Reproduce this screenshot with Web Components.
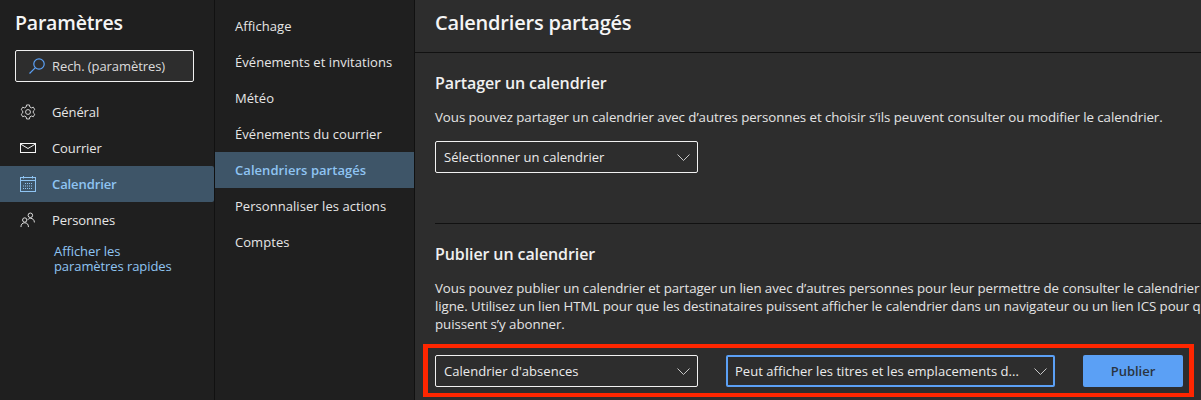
<!DOCTYPE html>
<html lang="fr">
<head>
<meta charset="utf-8">
<title>Paramètres</title>
<style>
  html, body { margin: 0; height: 100%; background: #2d2d2d; overflow: hidden; }
  body { font-family: "Open Sans", "Noto Sans", sans-serif; color: #f0f0f0; }
</style>
</head>
<body>
<settings-app></settings-app>

<script>
// dropdown with a chevron
class SelectBox extends HTMLElement {
    constructor() {
        super();
        this.attachShadow({ mode: 'open' });
        this.shadowRoot.innerHTML = `
      <style>
        :host {
          display: flex;
          align-items: center;
          justify-content: space-between;
          box-sizing: border-box;
          height: 32px;
          padding: 0 7px 0 8px;
          border: 1px solid #f2f2f2;
          border-radius: 2px;
          font-size: 13px;
          letter-spacing: 0.04px;
          color: #ebebeb;
          white-space: nowrap;
        }
        :host([focused]) { border: 2px solid #5ba0f5; padding: 0 6px 0 7px; }
        svg { flex: none; display: block; }
      </style>
      <slot></slot>
      <svg width="13" height="7" viewBox="0 0 13 7" fill="none" stroke="#c8c8c8" stroke-width="1">
        <path d="M0.5 0.5 L6.5 6.5 L12.5 0.5"/>
      </svg>
    `;
    }
}

// row in the first column, icon comes in through a slot
class NavItem extends HTMLElement {
    constructor() {
        super();
        this.attachShadow({ mode: 'open' });
        this.shadowRoot.innerHTML = `
      <style>
        :host {
          display: flex;
          align-items: center;
          gap: 14px;
          height: 36px;
          padding-left: 20px;
          font-size: 13px;
          letter-spacing: -0.1px;
          color: #e6e6e6;
        }
        :host([selected]) { background: #3e5568; color: #8fc4f2; font-weight: 600; border-radius: 0 2px 2px 0; }
        .icon { width: 18px; height: 18px; display: flex; align-items: center; justify-content: flex-start; }
      </style>
      <span class="icon"><slot name="icon"></slot></span>
      <slot></slot>
    `;
    }
}

// row in the second column
class SubItem extends HTMLElement {
    constructor() {
        super();
        this.attachShadow({ mode: 'open' });
        this.shadowRoot.innerHTML = `
      <style>
        :host {
          display: flex;
          align-items: center;
          height: 36px;
          padding-left: 20px;
          font-size: 13px;
          letter-spacing: 0.05px;
          color: #e6e6e6;
          white-space: nowrap;
        }
        :host([selected]) { background: #3e5568; color: #8fc4f2; font-weight: 600; }
      </style>
      <slot></slot>
    `;
    }
}

class SettingsSidebar extends HTMLElement {
    constructor() {
        super();
        this.attachShadow({ mode: 'open' });
        this.shadowRoot.innerHTML = `
      <style>
        :host {
          display: flex;
          flex-direction: column;
          box-sizing: border-box;
          width: 214px;
          flex: none;
          background: #1f1f1f;
          padding-top: 9px;
        }
        h1 { margin: 0 0 0 15px; font-size: 19.5px; line-height: 28px; font-weight: 600; color: #f5f5f5; letter-spacing: -0.2px; }
        .search {
          display: flex;
          align-items: center;
          gap: 6px;
          box-sizing: border-box;
          width: 179px;
          height: 32px;
          margin: 13px 0 12px 15px;
          padding-left: 12px;
          background: #2d2d2d;
          border: 1px solid #f0f0f0;
          border-radius: 2px;
          font-size: 13px;
          letter-spacing: -0.08px;
          color: #dcdcdc;
        }
        svg { display: block; }
        .quick {
          margin: 6px 0 0 54px;
          font-size: 13px;
          line-height: 15px;
          letter-spacing: -0.08px;
          color: #8fc4f2;
        }
      </style>
      <h1>Paramètres</h1>
      <div class="search">
        <svg width="18" height="18" viewBox="0 0 18 18" fill="none" stroke="#5ba0f5" stroke-width="1.2">
          <circle cx="11" cy="7" r="5.2"/>
          <path d="M7.2 10.8 L1.5 16.5"/>
        </svg>
        <span>Rech. (paramètres)</span>
      </div>
      <nav-item>
        <svg slot="icon" width="16" height="16" viewBox="0 0 17 17" fill="none" stroke="#dcdcdc" stroke-width="1">
          <circle cx="8.5" cy="8.5" r="2.6"/>
          <path d="M7 1 h3 l.5 2.2 l1.6 .9 l2.1 -.7 l1.5 2.6 l-1.6 1.5 v1.9 l1.6 1.5 l-1.5 2.6 l-2.1 -.7 l-1.6 .9 l-.5 2.2 h-3 l-.5 -2.2 l-1.6 -.9 l-2.1 .7 l-1.5 -2.6 l1.6 -1.5 v-1.9 l-1.6 -1.5 l1.5 -2.6 l2.1 .7 l1.6 -.9 z" stroke-linejoin="round"/>
        </svg>
        Général
      </nav-item>
      <nav-item>
        <svg slot="icon" width="16" height="10" viewBox="0 0 16 10" fill="none" stroke="#f5f5f5" stroke-width="1">
          <rect x="0.5" y="0.5" width="15" height="9"/>
          <path d="M0.5 1 L8 5.5 L15.5 1"/>
        </svg>
        Courrier
      </nav-item>
      <nav-item selected>
        <svg slot="icon" width="16" height="16" viewBox="0 0 16 16" fill="none" stroke="#8fc4f2" stroke-width="1">
          <rect x="0.5" y="1.5" width="15" height="14"/>
          <path d="M0.5 4.5 H15.5 M3.5 0 V2.5 M12.5 0 V2.5"/>
          <path d="M5 7.5 h8 M3 10 h10 M3 12.5 h10" stroke-dasharray="1 1"/>
        </svg>
        Calendrier
      </nav-item>
      <nav-item>
        <svg slot="icon" width="16" height="16" viewBox="0 0 17 16" fill="none" stroke="#e6e6e6" stroke-width="1">
          <circle cx="5" cy="8" r="2.3"/>
          <path d="M1 15.5 C1 12.5 2.6 11 5 11 C7.4 11 9 12.5 9 15.5"/>
          <circle cx="11" cy="3" r="2.4"/>
          <path d="M8.3 7.8 C9 6.7 9.9 6.2 11 6.2 C13.6 6.2 15.3 8 15.3 10.6"/>
        </svg>
        Personnes
      </nav-item>
      <div class="quick">Afficher les<br>paramètres rapides</div>
    `;
    }
}

class SettingsSubnav extends HTMLElement {
    constructor() {
        super();
        this.attachShadow({ mode: 'open' });
        this.shadowRoot.innerHTML = `
      <style>
        :host {
          display: flex;
          flex-direction: column;
          box-sizing: border-box;
          width: 199px;
          flex: none;
          margin-left: 1px;
          background: #1f1f1f;
          padding-top: 8px;
        }
      </style>
      <slot></slot>
    `;
    }
}

class CalendarSection extends HTMLElement {
    constructor() {
        super();
        this.attachShadow({ mode: 'open' });
        this.shadowRoot.innerHTML = `
      <style>
        :host { display: block; }
        h3 { margin: 0; font-size: 16px; line-height: 22px; font-weight: 600; color: #f0f0f0; letter-spacing: -0.1px; }
        p { margin: 14px 0 15px; font-size: 13.3px; line-height: 18px; letter-spacing: -0.06px; color: #e4e4e4; white-space: nowrap; }
      </style>
      <h3><slot name="title"></slot></h3>
      <p><slot name="text"></slot></p>
      <slot></slot>
    `;
    }
}

class SharedCalendars extends HTMLElement {
    constructor() {
        super();
        this.attachShadow({ mode: 'open' });
        this.shadowRoot.innerHTML = `
      <style>
        :host {
          display: block;
          flex: 1;
          min-width: 0;
          margin-left: 1px;
          background: #2d2d2d;
          overflow: hidden;
        }
        header {
          box-sizing: border-box;
          height: 53px;
          padding: 9px 0 0 20px;
          font-size: 20px;
          line-height: 28px;
          font-weight: 600;
          letter-spacing: -0.2px;
          color: #f5f5f5;
          border-bottom: 1px solid #111;
        }
        .body { padding: 19px 0 0 20px; }
        .first select-box { width: 263px; }
        hr { border: 0; border-top: 1px solid #111; margin: 50px 0 19px; }
        .row {
          display: flex;
          align-items: flex-start;
          box-sizing: border-box;
          width: 771px;
          height: 53px;
          margin: -4px 0 0 -12px;
          padding: 7px 0 0 7px;
          border: 4px solid #ff2600;
          border-left-width: 5px;
          border-right-width: 5px;
        }
        .row select-box:first-child { width: 263px; }
        .row select-box + select-box { width: 329px; margin-left: 28px; }
        .publish {
          box-sizing: border-box;
          width: 100px;
          height: 32px;
          margin-left: 28px;
          display: flex;
          align-items: center;
          justify-content: center;
          background: #5ba0f5;
          border-radius: 2px;
          font-size: 13px;
          font-weight: 600;
          color: #2a3440;
        }
      </style>
      <header>Calendriers partagés</header>
      <div class="body">
        <calendar-section class="first">
          <span slot="title">Partager un calendrier</span>
          <span slot="text">Vous pouvez partager un calendrier avec d’autres personnes et choisir s’ils peuvent consulter ou modifier le calendrier.</span>
          <select-box>Sélectionner un calendrier</select-box>
        </calendar-section>
        <hr>
        <calendar-section>
          <span slot="title">Publier un calendrier</span>
          <span slot="text">Vous pouvez publier un calendrier et partager un lien avec d’autres personnes pour leur permettre de consulter le calendrier en<br>ligne. Utilisez un lien HTML pour que les destinataires puissent afficher le calendrier dans un navigateur ou un lien ICS pour qu’ils<br>puissent s’y abonner.</span>
          <div class="row">
            <select-box>Calendrier d'absences</select-box>
            <select-box focused>Peut afficher les titres et les emplacements d...</select-box>
            <div class="publish">Publier</div>
          </div>
        </calendar-section>
      </div>
    `;
    }
}

class SettingsApp extends HTMLElement {
    constructor() {
        super();
        this.attachShadow({ mode: 'open' });
        this.shadowRoot.innerHTML = `
      <style>
        :host { display: flex; width: 1201px; height: 400px; background: #111; overflow: hidden; }
      </style>
      <settings-sidebar></settings-sidebar>
      <settings-subnav>
        <sub-item>Affichage</sub-item>
        <sub-item>Événements et invitations</sub-item>
        <sub-item>Météo</sub-item>
        <sub-item>Événements du courrier</sub-item>
        <sub-item selected>Calendriers partagés</sub-item>
        <sub-item>Personnaliser les actions</sub-item>
        <sub-item>Comptes</sub-item>
      </settings-subnav>
      <shared-calendars></shared-calendars>
    `;
    }
}

customElements.define('select-box', SelectBox);
customElements.define('nav-item', NavItem);
customElements.define('sub-item', SubItem);
customElements.define('settings-sidebar', SettingsSidebar);
customElements.define('settings-subnav', SettingsSubnav);
customElements.define('calendar-section', CalendarSection);
customElements.define('shared-calendars', SharedCalendars);
customElements.define('settings-app', SettingsApp);
</script>
</body>
</html>
